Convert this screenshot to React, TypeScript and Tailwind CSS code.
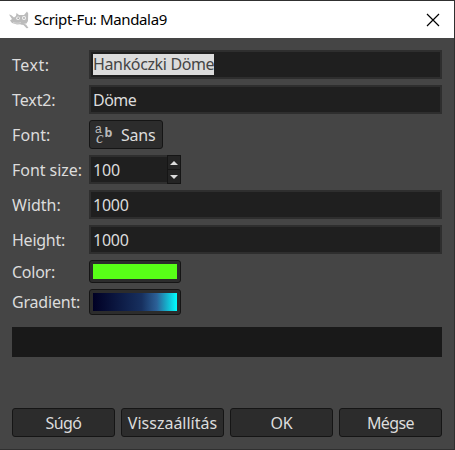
import React from "react";

const labelFont = "font-['Noto_Sans','Liberation_Sans',sans-serif]";

function Label({ children, className = "" }: { children: string; className?: string }) {
  return (
    <span className="flex w-[77px] shrink-0 items-center whitespace-nowrap">
      <span className={className}>{children}</span>
    </span>
  );
}

function Entry({ children }: { children: React.ReactNode }) {
  return (
    <div className="flex h-[29px] flex-1 items-center border-2 border-[#2e2e2e] bg-[#1f1f1f] px-[2px]">
      {children}
    </div>
  );
}

function Button({ children, className = "" }: { children: string; className?: string }) {
  return (
    <button className={`flex h-[29px] w-[103px] items-center justify-center rounded-[3px] border border-[#151515] bg-[#2c2c2c] whitespace-nowrap ${className}`}>
      {children}
    </button>
  );
}

function Wilber() {
  return (
    <svg width="20" height="18" viewBox="0 0 20 18" fill="#bcbcbc">
      <path d="M0 3.5 2 4l3 2.5 2-1.5.5-3L10 4h5l3-3.5 1.2 2L19 10l-1.5 2.5L14 13l-6 .5L3 12l-2-2.5L3 8 0 3.5Z" />
      <path d="m12 12 5 1.5 2.5 3.5-2 .2-3-3.2-3-.5Z" />
      <circle cx="9" cy="7.2" r="1.8" fill="#f5f5f5" />
      <circle cx="15" cy="7" r="2" fill="#f5f5f5" />
      <circle cx="9.2" cy="7.2" r=".9" fill="#aaa" />
      <circle cx="15" cy="7" r=".9" fill="#aaa" />
      <path d="M4 11.3c2.5 1 5 1.2 8 .2" fill="none" stroke="#e0e0e0" strokeWidth=".7" />
    </svg>
  );
}

export default function App() {
  return (
    <div className={`flex h-[450px] w-[455px] flex-col overflow-hidden border-t border-r border-b border-[#303030] bg-[#454545] text-[16px] leading-[20px] text-[#dcdcdc] ${labelFont}`}>
      <header className="flex h-[37px] shrink-0 items-center bg-white pl-[9px] text-black">
        <Wilber />
        <h1 className="ml-[5px] pb-px text-[15px] tracking-[-0.36px] whitespace-nowrap">Script-Fu: Mandala9</h1>
        <svg className="mr-[14px] ml-auto" width="14" height="14" viewBox="0 0 14 14" stroke="#000" strokeWidth="1.2">
          <path d="m1 1 12 12M13 1 1 13" />
        </svg>
      </header>
      <main className="flex flex-1 flex-col p-3">
        <div className="flex flex-col gap-1.5">
          <div className="flex">
            <Label className="tracking-[0.5px]">Text:</Label>
            <Entry>
              <span className="h-[21px] bg-[#dcdcdc] tracking-[-0.36px] whitespace-nowrap text-[#454545]">Hankóczki Döme</span>
            </Entry>
          </div>
          <div className="flex">
            <Label className="tracking-[-0.1px]">Text2:</Label>
            <Entry><span className="tracking-[-0.5px]">Döme</span></Entry>
          </div>
          <div className="flex">
            <Label className="tracking-[0.1px]">Font:</Label>
            <div className="flex h-[29px] w-[74px] items-center rounded-[3px] border border-[#151515] bg-[#2c2c2c] pl-[5px]">
              <svg className="mr-[6px] overflow-visible" width="20" height="20" viewBox="0 0 20 20" fill="#bababa">
                <text x="0" y="7.5" fontSize="12" fontFamily="Liberation Sans">a</text>
                <text x="9.5" y="12" fontSize="12.5" fontWeight="bold" fontFamily="Noto Sans">b</text>
                <text x="1" y="18" fontSize="17" fontStyle="italic" fontFamily="Liberation Serif">c</text>
              </svg>
              <span className="tracking-[-0.25px]">Sans</span>
            </div>
          </div>
          <div className="flex">
            <Label className="tracking-[-0.05px]">Font size:</Label>
            <div className="flex h-[29px] w-[92px]">
              <div className="flex flex-1 items-center border-2 border-r-0 border-[#2e2e2e] bg-[#1f1f1f] px-[2px]">
                <span className="tracking-[-0.15px]">100</span>
              </div>
              <div className="flex w-[14px] flex-col border border-[#151515] bg-[#242424]">
                <span className="flex h-[14px] items-center justify-center border-b border-[#151515]">
                  <svg width="8" height="4" viewBox="0 0 8 4" fill="#dcdcdc"><path d="M0 4 4 0l4 4Z" /></svg>
                </span>
                <span className="flex flex-1 items-center justify-center">
                  <svg width="8" height="4" viewBox="0 0 8 4" fill="#dcdcdc"><path d="m0 0 4 4 4-4Z" /></svg>
                </span>
              </div>
            </div>
          </div>
          <div className="flex">
            <Label>Width:</Label>
            <Entry><span className="tracking-[-0.25px]">1000</span></Entry>
          </div>
          <div className="flex">
            <Label className="tracking-[-0.25px]">Height:</Label>
            <Entry><span className="tracking-[-0.25px]">1000</span></Entry>
          </div>
          <div className="flex">
            <Label className="tracking-[-0.25px]">Color:</Label>
            <div className="h-[23px] w-[92px] rounded-[3px] border border-[#151515] bg-[#2c2c2c] p-[3px]">
              <div className="h-full bg-[#58ff17]" />
            </div>
          </div>
          <div className="flex">
            <Label className="tracking-[-0.2px]">Gradient:</Label>
            <div className="h-[26px] w-[92px] rounded-[3px] border border-[#151515] bg-[#2c2c2c] p-[3px]">
              <div className="h-full bg-[linear-gradient(90deg,#000024_0%,#17305f_58%,#2c6198_76%,#00ffff_100%)]" />
            </div>
          </div>
        </div>
        <div className="mt-3 h-[30px] bg-[#191919]" />
        <footer className="mt-auto flex gap-1.5">
          <Button className="tracking-[-0.6px]">Súgó</Button>
          <Button>Visszaállítás</Button>
          <Button className="tracking-[-0.2px]">OK</Button>
          <Button className="tracking-[-0.6px]">Mégse</Button>
        </footer>
      </main>
    </div>
  );
}
